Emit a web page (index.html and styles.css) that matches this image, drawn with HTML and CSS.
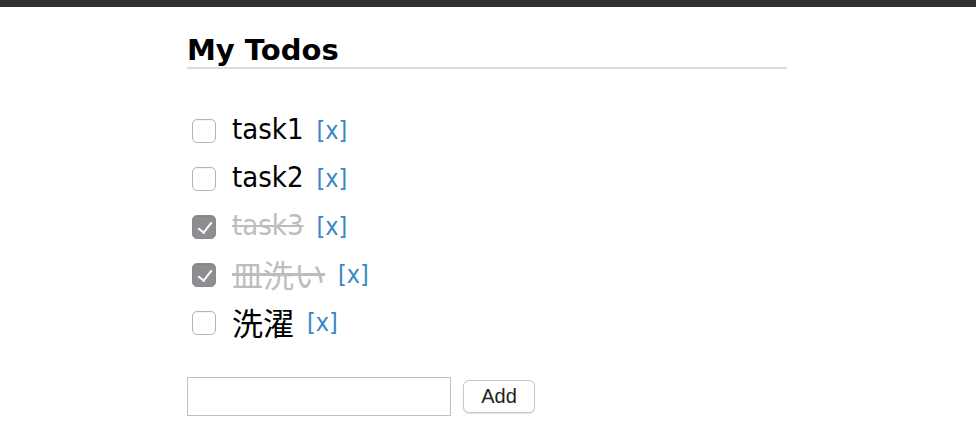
FILE: index.html
```html
<!DOCTYPE html>
<html lang="ja">
<head>
<meta charset="utf-8">
<title>My Todos</title>
<link rel="stylesheet" href="styles.css">
</head>
<body>
<div class="topbar"></div>
<main class="container">
  <h2 class="title">My Todos</h2>
  <ul class="todos">
    <li class="todo"><input type="checkbox" class="check"><span class="label">task1</span><a class="del">[x]</a></li>
    <li class="todo"><input type="checkbox" class="check"><span class="label">task2</span><a class="del">[x]</a></li>
    <li class="todo done"><input type="checkbox" class="check" checked><span class="label">task3</span><a class="del">[x]</a></li>
    <li class="todo done"><input type="checkbox" class="check" checked><span class="label ja">皿洗い</span><a class="del">[x]</a></li>
    <li class="todo"><input type="checkbox" class="check"><span class="label ja">洗濯</span><a class="del">[x]</a></li>
  </ul>
  <form class="add-form">
    <input type="text" class="new-todo">
    <button type="button" class="add-btn">Add</button>
  </form>
</main>
</body>
</html>
```
FILE: styles.css
```css
html, body {
  margin: 0;
  padding: 0;
  background: #fff;
}
body {
  font-family: "DejaVu Sans Condensed", "DejaVu Sans", "Noto Sans CJK JP", sans-serif;
  font-stretch: condensed;
  color: #000;
}
.topbar {
  height: 7px;
  background: #2e3033;
}
.container {
  width: 600px;
  margin-left: 187px;
}
.title {
  margin: 27px 0 0;
  font-family: "DejaVu Sans", "Noto Sans CJK JP", sans-serif;
  font-stretch: normal;
  font-size: 29px;
  line-height: 33px;
  font-weight: bold;
  border-bottom: 2px solid #dcdcdc;
}
.todos {
  list-style: none;
  margin: 38px 0 0;
  padding: 0;
}
.todo {
  height: 48px;
  display: flex;
  align-items: center;
}
.check {
  appearance: none;
  -webkit-appearance: none;
  width: 24px;
  height: 24px;
  margin: 0 16px 0 5px;
  border: 1px solid #b5b5b5;
  border-radius: 5px;
  background: #fff;
  box-sizing: border-box;
  box-shadow: inset 0 1px 1px rgba(0,0,0,0.05);
  position: relative;
  flex: none;
}
.check:checked {
  background: #8e8e92;
  border-color: #8a8a8e;
}
.check:checked::after {
  content: "";
  position: absolute;
  left: 8px;
  top: 3px;
  width: 6px;
  height: 12px;
  border: solid #fff;
  border-width: 0 2px 2px 0;
  transform: rotate(38deg);
}
.label {
  font-size: 29px;
  line-height: 36px;
  margin-bottom: 5px;
}
.label.ja {
  font-family: "Noto Sans CJK JP", sans-serif;
  font-size: 31px;
  line-height: 36px;
  margin-bottom: 2px;
}
.done .label {
  color: #bdbdbd;
  text-decoration: line-through;
}
.del {
  font-size: 25px;
  color: #3a87c6;
  margin-left: 13px;
  margin-bottom: 1px;
  cursor: pointer;
}
.add-form {
  display: flex;
  align-items: center;
  margin-top: 30px;
}
.new-todo {
  width: 264px;
  height: 39px;
  box-sizing: border-box;
  border: 1px solid #bfbfbf;
  margin: 0;
  padding: 0 6px;
}
.add-btn {
  margin-left: 12px;
  width: 72px;
  height: 33px;
  border: 1px solid #c8c8c8;
  border-radius: 6px;
  background: #fff;
  box-shadow: 0 1px 1px rgba(0,0,0,0.12);
  font-family: "Liberation Sans", Arial, sans-serif;
  font-size: 20px;
  color: #222;
  padding: 0;
}
```
